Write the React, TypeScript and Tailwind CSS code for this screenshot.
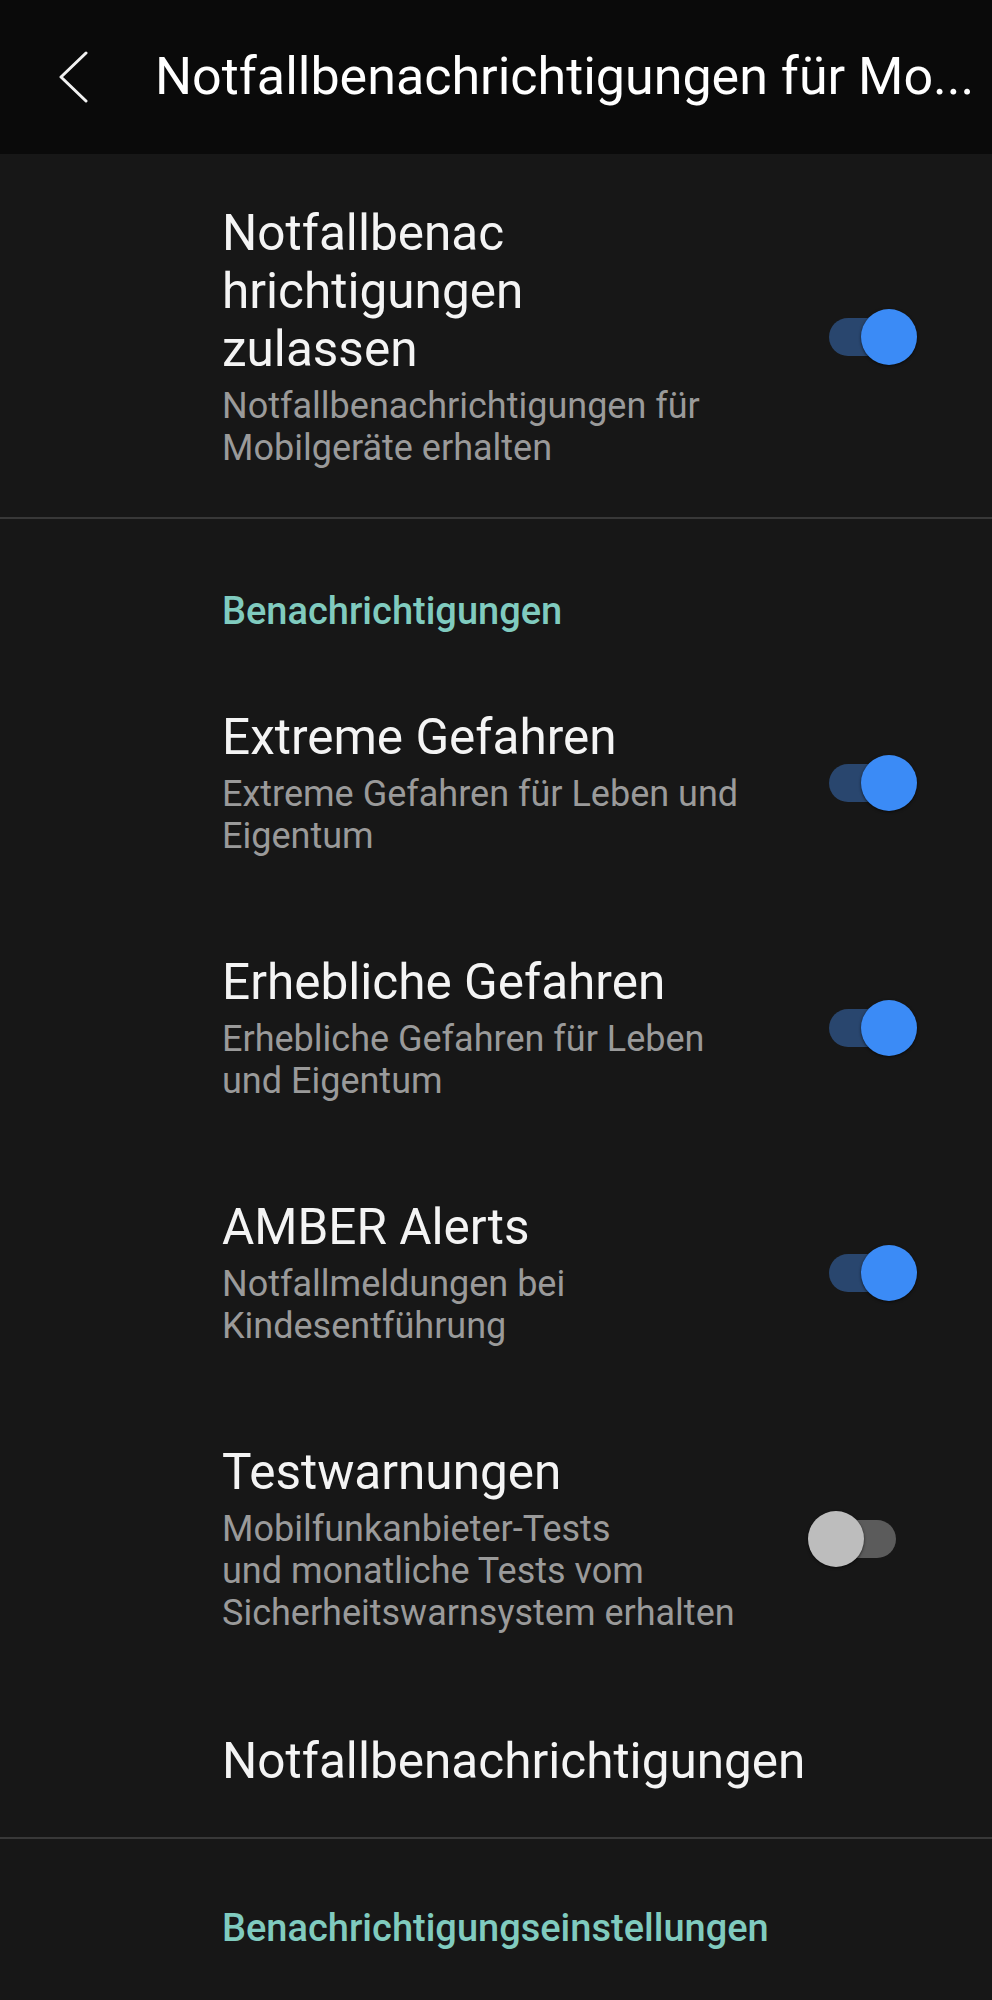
import React from "react";

type RowProps = {
  title: React.ReactNode;
  sub: React.ReactNode;
  on: boolean;
};

const Toggle = ({ on }: { on: boolean }) => {
  if (on) {
    return (
      <div className="relative w-[88px] h-[56px] shrink-0">
        <div className="absolute left-0 top-[9px] w-[78px] h-[38px] rounded-full bg-[#29466e]" />
        <div className="absolute right-0 top-0 size-[56px] rounded-full bg-[#3b8bf6] shadow-[0_1px_3px_rgba(0,0,0,0.6)]" />
      </div>
    );
  }
  return (
    <div className="relative w-[88px] h-[56px] shrink-0 mr-[21px]">
      <div className="absolute right-0 top-[9px] w-[78px] h-[38px] rounded-full bg-[#5b5b5b]" />
      <div className="absolute left-0 top-0 size-[56px] rounded-full bg-[#bdbdbd] shadow-[0_1px_3px_rgba(0,0,0,0.6)]" />
    </div>
  );
};

const Row = ({ title, sub, on }: RowProps) => {
  return (
    <div className="flex items-center pl-[222px] pr-[75px] py-[48px]">
      <div className="flex-1">
        <div className="text-[49.5px] leading-[58px] text-[#f4f4f4] whitespace-nowrap">{title}</div>
        <div className="mt-[7px] text-[36px] leading-[42px] text-[#9a9a9a] whitespace-nowrap">{sub}</div>
      </div>
      <Toggle on={on} />
    </div>
  );
};

export default function App() {
  return (
    <div className="w-[992px] min-h-[2000px] bg-[#171717] font-['Roboto',sans-serif]">
      <div className="h-[154px] bg-[#0a0a0a] flex items-center">
        <div className="w-[155px] flex items-center">
          <svg width="30" height="52" viewBox="0 0 30 52" className="ml-[58px]">
            <path d="M28 2 L3 26 L28 50" fill="none" stroke="#f2f2f2" strokeWidth="3" strokeLinecap="round" strokeLinejoin="round" />
          </svg>
        </div>
        <div className="text-[52px] leading-[60px] text-white whitespace-nowrap">Notfallbenachrichtigungen für Mo...</div>
      </div>

      <div className="flex items-center pl-[222px] pr-[75px] pt-[50px] pb-[48px]">
        <div className="flex-1">
          <div className="text-[49.5px] leading-[58px] text-[#f4f4f4] whitespace-nowrap">
            Notfallbenac
            <br />
            hrichtigungen
            <br />
            zulassen
          </div>
          <div className="mt-[7px] text-[36px] leading-[42px] text-[#9a9a9a] whitespace-nowrap">
            Notfallbenachrichtigungen für
            <br />
            Mobilgeräte erhalten
          </div>
        </div>
        <Toggle on={true} />
      </div>

      <div className="h-[2px] bg-[#383838]" />

      <div className="pl-[222px] pt-[71px] pb-[28px] text-[38px] leading-[42px] font-medium text-[#80cbbf]">
        Benachrichtigungen
      </div>

      <Row
        title="Extreme Gefahren"
        sub={
          <>
            Extreme Gefahren für Leben und
            <br />
            Eigentum
          </>
        }
        on={true}
      />
      <Row
        title="Erhebliche Gefahren"
        sub={
          <>
            Erhebliche Gefahren für Leben
            <br />
            und Eigentum
          </>
        }
        on={true}
      />
      <Row
        title="AMBER Alerts"
        sub={
          <>
            Notfallmeldungen bei
            <br />
            Kindesentführung
          </>
        }
        on={true}
      />
      <Row
        title="Testwarnungen"
        sub={
          <>
            Mobilfunkanbieter-Tests
            <br />
            und monatliche Tests vom
            <br />
            Sicherheitswarnsystem erhalten
          </>
        }
        on={false}
      />

      <div className="pl-[222px] pt-[50px] pb-[47px] text-[49.5px] leading-[58px] text-[#f4f4f4]">
        Notfallbenachrichtigungen
      </div>

      <div className="h-[2px] bg-[#383838]" />

      <div className="pl-[222px] pt-[68px] pb-[40px] text-[38px] leading-[42px] font-medium text-[#80cbbf]">
        Benachrichtigungseinstellungen
      </div>
    </div>
  );
}
